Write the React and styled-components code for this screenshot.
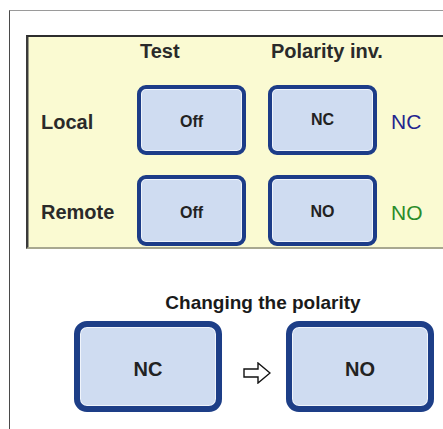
import React from 'react';
import styled, { createGlobalStyle } from 'styled-components';

const Global = createGlobalStyle`
  html, body {
    margin: 0;
    padding: 0;
    background: #ffffff;
    overflow: hidden;
  }
`

const Frame = styled.div`
  margin: 10px 0 0 9px;
  height: 419px;
  box-sizing: border-box;
  border-top: 1px solid #9a9a9a;
  border-left: 1px solid #4a4a4a;
  padding-top: 24px;
  font-family: "Liberation Sans", Arial, sans-serif;
`

const Panel = styled.div`
  margin-left: 16px;
  background-color: #fafad2;
  border-top: 2px solid #2d2d2d;
  border-left: 2px solid #3a3a3a;
  border-bottom: 2px solid #a8a890;
  box-shadow: inset 1px 0 0 #9c9c88;
  padding: 0 0 1px 13px;
  display: grid;
  grid-template-columns: 96px 131px 123px auto;
  grid-template-rows: 28px 70px 71px;
  row-gap: 20px;
  align-items: center;
`

const Heading = styled.div`
  grid-row: 1;
  grid-column: ${p => p.$col};
  padding-left: 3px;
  font-size: 20px;
  font-weight: bold;
  color: #2a2a2a;
`

const Label = styled.div`
  grid-row: ${p => p.$row};
  grid-column: 1;
  font-size: 20px;
  font-weight: bold;
  color: #2a2a2a;
  padding-top: 4px;
`

const Toggle = styled.div`
  grid-row: ${p => p.$row};
  grid-column: ${p => p.$col};
  width: 109px;
  height: 100%;
  box-sizing: border-box;
  border: 4px solid #1c3c88;
  border-radius: 9px;
  background-color: #cfdcf1;
  box-shadow: inset 0 0 0 1px #eef3fb;
  display: flex;
  align-items: center;
  justify-content: center;
  font-weight: bold;
  font-size: 16px;
  color: #222;
  padding-top: ${p => p.$drop || 0}px;
`

const State = styled.div`
  grid-row: ${p => p.$row};
  grid-column: 4;
  font-size: 21px;
  color: ${p => p.$color};
  padding-top: 4px;
`

const Bottom = styled.div`
  margin-top: 42px;
`

const Title = styled.div`
  padding-left: 73px;
  text-align: center;
  font-size: 19px;
  line-height: 23px;
  font-weight: bold;
  color: #1a1a1a;
`

const SwapRow = styled.div`
  margin-top: 7px;
  padding-left: 64px;
  display: flex;
  align-items: center;
`

const BigToggle = styled.div`
  width: 148px;
  height: 91px;
  box-sizing: border-box;
  border: 6px solid #1d3e87;
  border-radius: 13px;
  background-color: #cfdcf1;
  box-shadow: inset 0 0 0 1px #f0f4fb;
  display: flex;
  align-items: center;
  justify-content: center;
  padding-top: 5px;
  font-size: 20px;
  font-weight: bold;
  color: #222;
`

const Arrow = styled.svg`
  margin: 12px 15px 0 21px;
  flex-shrink: 0;
`

export default function App() {
  return (
    <>
      <Global />
      <Frame>
        <Panel>
          <Heading $col={2}>Test</Heading>
          <Heading $col={3}>Polarity inv.</Heading>

          <Label $row={2}>Local</Label>
          <Toggle $row={2} $col={2} $drop={3}>Off</Toggle>
          <Toggle $row={2} $col={3}>NC</Toggle>
          <State $row={2} $color="#24248f">NC</State>

          <Label $row={3}>Remote</Label>
          <Toggle $row={3} $col={2} $drop={4}>Off</Toggle>
          <Toggle $row={3} $col={3} $drop={2}>NO</Toggle>
          <State $row={3} $color="#2a8c2a">NO</State>
        </Panel>

        <Bottom>
          <Title>Changing the polarity</Title>
          <SwapRow>
            <BigToggle>NC</BigToggle>
            <Arrow width="28" height="22" viewBox="0 0 28 22">
              <path d="M1 7 H15 V1 L27 11 L15 21 V15 H1 Z" fill="#fff" stroke="#111" strokeWidth="1.4" strokeLinejoin="miter" />
            </Arrow>
            <BigToggle>NO</BigToggle>
          </SwapRow>
        </Bottom>
      </Frame>
    </>
  );
}
